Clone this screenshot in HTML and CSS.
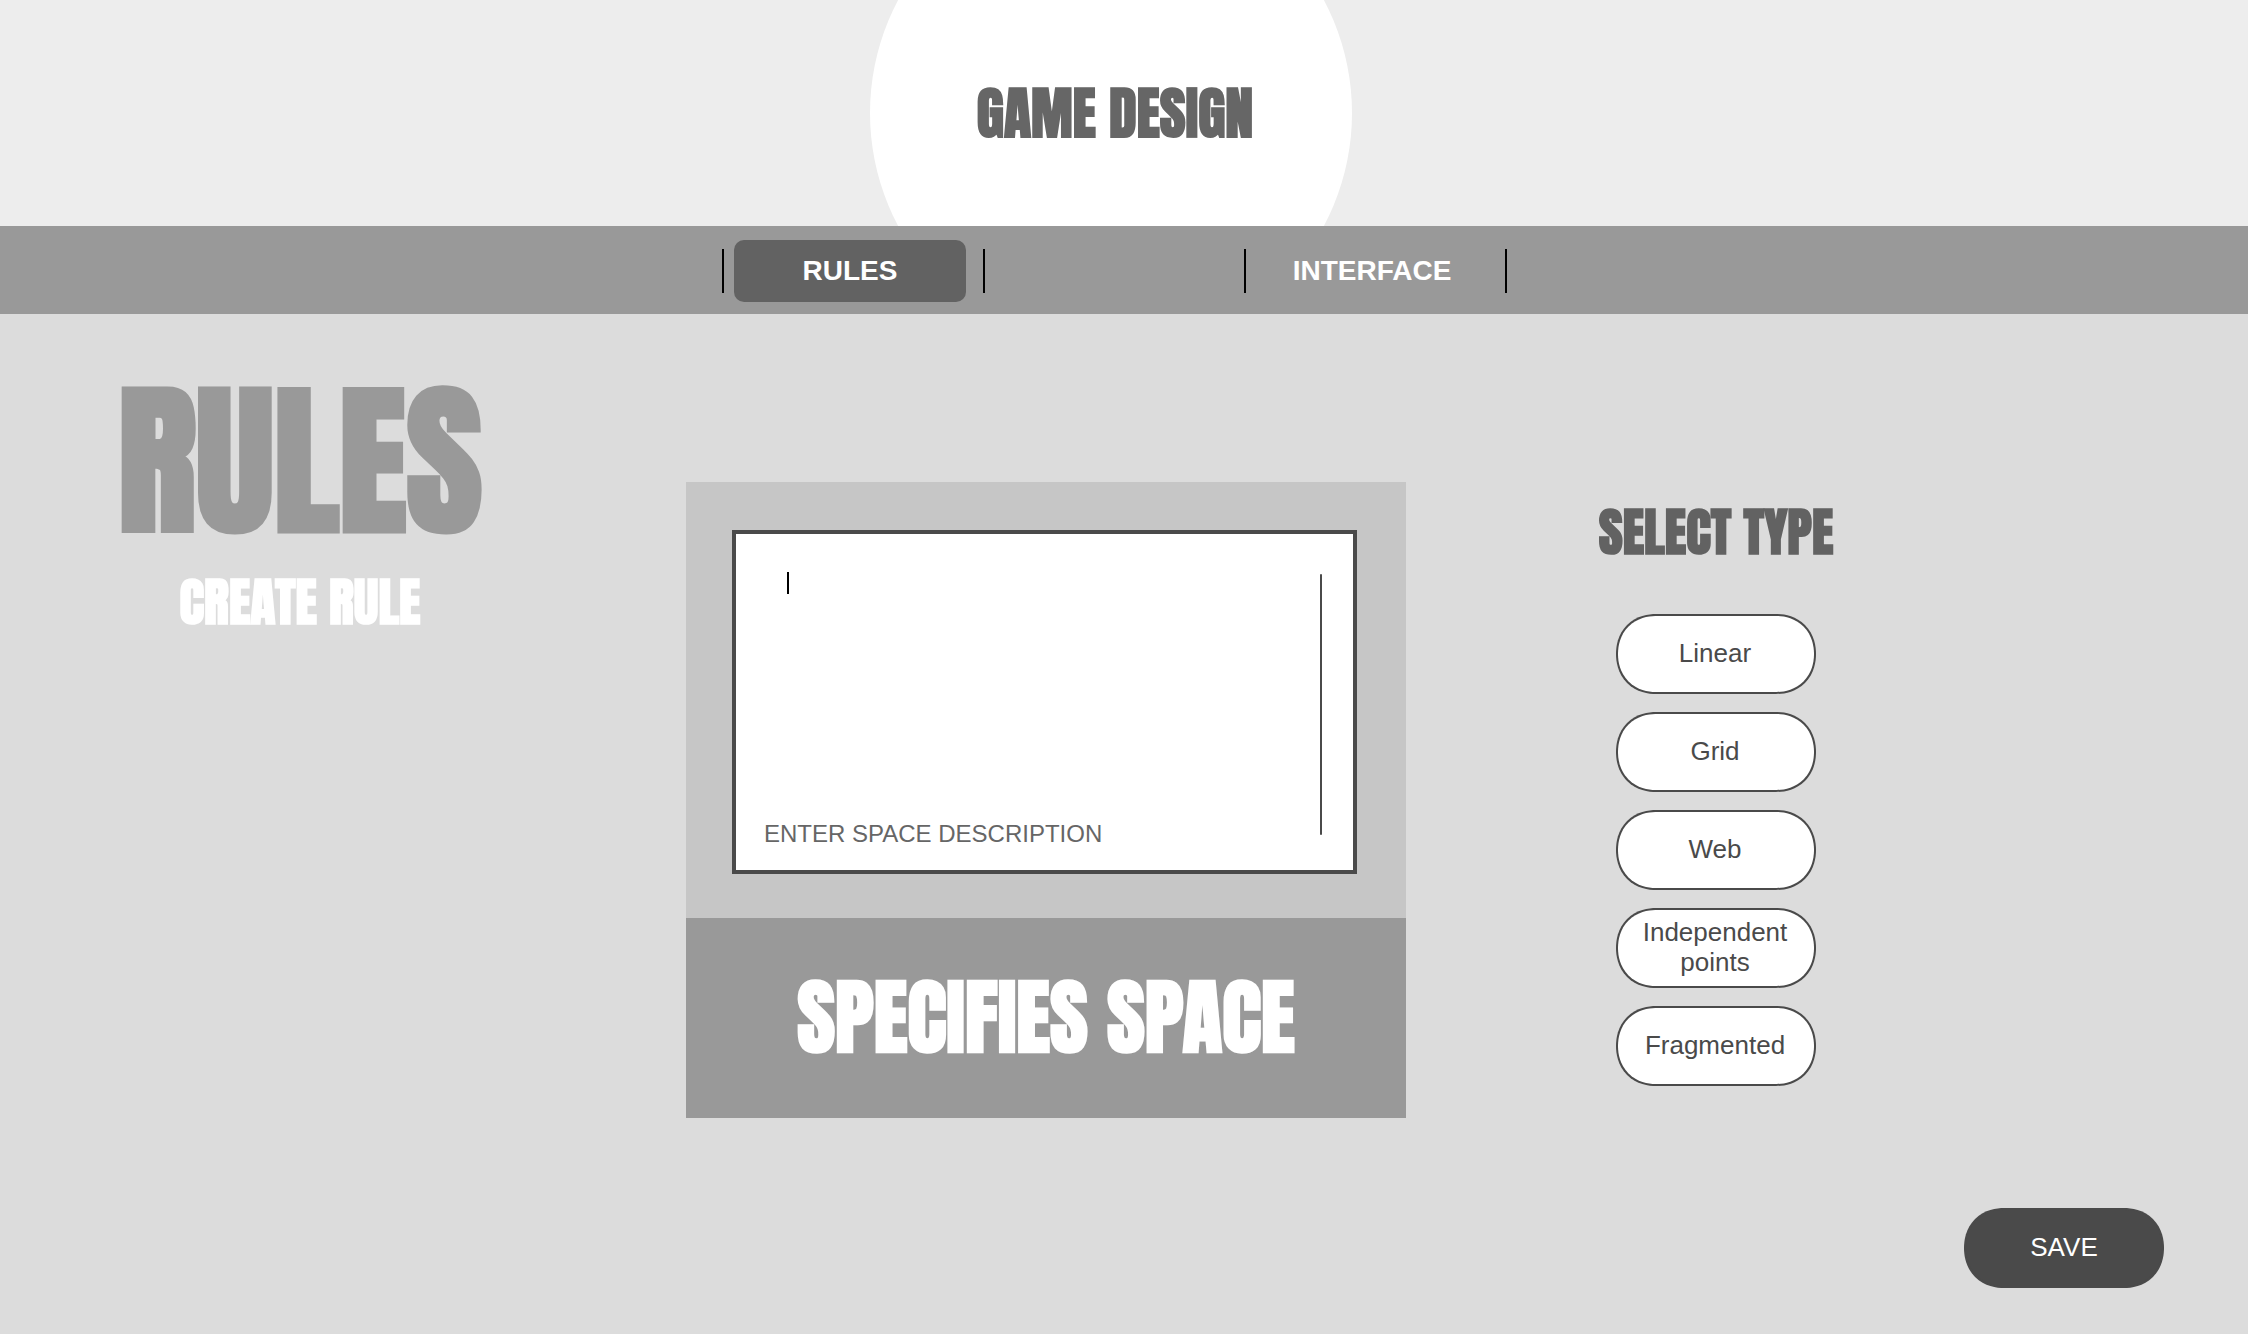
FILE: index.html
```html
<!DOCTYPE html>
<html lang="en">
<head>
<meta charset="utf-8">
<title>Game Design</title>
<link rel="stylesheet" href="styles.css">
</head>
<body>
<header class="masthead">
  <div class="disc"><h1 class="display brand">GAME DESIGN</h1></div>
</header>
<nav class="tabs">
  <ul class="tab-list">
    <li class="tab"><a class="tab-link active" href="#rules" aria-current="page">RULES</a></li>
    <li class="tab"></li>
    <li class="tab"><a class="tab-link" href="#interface">INTERFACE</a></li>
  </ul>
</nav>
<main class="workspace">
  <section class="intro">
    <h2 class="display section-title">RULES</h2>
    <p class="display step">CREATE RULE</p>
  </section>
  <section class="card">
    <div class="card-body">
      <div class="editor">
        <div class="entry">
          <span class="caret"></span>
          <textarea class="input" id="description"></textarea>
        </div>
        <label class="hint" for="description">ENTER SPACE DESCRIPTION</label>
        <span class="rail"></span>
      </div>
    </div>
    <h2 class="display card-title">SPECIFIES SPACE</h2>
  </section>
  <section class="types">
    <h2 class="display types-title">SELECT TYPE</h2>
    <button class="pill" type="button">Linear</button>
    <button class="pill" type="button">Grid</button>
    <button class="pill" type="button">Web</button>
    <button class="pill" type="button">Independent points</button>
    <button class="pill" type="button">Fragmented</button>
  </section>
  <div class="actions">
    <button class="pill save" type="submit">SAVE</button>
  </div>
</main>
</body>
</html>
```
FILE: styles.css
```css
* { box-sizing: border-box; margin: 0; }

body {
  display: flex;
  flex-direction: column;
  min-height: 100vh;
  border-right: 2px solid #fff;
  background: #dcdcdc;
  color: #4a4a4a;
  font-family: "Liberation Sans", Arial, sans-serif;
  font-size: 26px;
  line-height: 30px;
}

.display {
  font-family: Impact, Anton, "Liberation Sans Narrow", "DejaVu Sans Condensed", sans-serif;
  font-weight: 900;
  white-space: nowrap;
  text-align: center;
}

.masthead {
  display: flex;
  align-items: center;
  justify-content: center;
  height: 226px;
  padding-right: 26px;
  overflow: hidden;
  background: #ededed;
}

.disc {
  display: flex;
  flex: none;
  align-items: center;
  justify-content: center;
  width: 482px;
  height: 482px;
  padding-left: 8px;
  border-radius: 50%;
  background: #fff;
}

.brand { color: #666; font-size: 56px; line-height: 60px; }

.tabs {
  display: flex;
  justify-content: center;
  padding: 23px 20px 21px 0;
  background: #999;
}

.tab-list {
  display: flex;
  padding: 0;
  border-right: 2px solid #000;
  list-style: none;
}

.tab {
  display: flex;
  align-items: center;
  justify-content: center;
  width: 261px;
  height: 44px;
  padding-right: 6px;
  border-left: 2px solid #000;
}

.tab-link {
  flex: none;
  width: 232px;
  border-radius: 10px;
  color: #fff;
  font-size: 28px;
  font-weight: bold;
  line-height: 62px;
  text-align: center;
  text-decoration: none;
}

.active { background: #626262; }

.workspace {
  display: grid;
  flex: 1;
  grid-template-columns: minmax(0, 600fr) minmax(0, 892fr) minmax(0, 448fr) minmax(0, 308fr);
}

.intro { padding-top: 38px; }
.section-title { color: #999; font-size: 164px; line-height: 220px; }
.step { color: #fff; font-size: 52px; line-height: 60px; }

.card {
  justify-self: center;
  width: 100%;
  max-width: 720px;
  margin-top: 168px;
}

.card-body { padding: 48px 49px 44px 46px; background: #c6c6c6; }

.editor {
  display: grid;
  grid-template: 1fr auto / 1fr auto;
  height: 344px;
  padding: 38px 31px 21px 28px;
  border: 4px solid #4a4a4a;
  background: #fff;
}

.entry { display: flex; padding-left: 23px; }
.caret { width: 2px; height: 22px; background: #000; }

.input {
  flex: 1;
  padding: 0;
  border: 0;
  outline: 0;
  background: none;
  color: inherit;
  font: inherit;
  resize: none;
}

.hint { grid-row: 2; color: #666; font-size: 24px; }

.rail {
  grid-area: 1 / 2 / 3 / 3;
  width: 2px;
  margin: 2px 0 14px;
  border-radius: 1px;
  background: #4a4a4a;
}

.card-title {
  background: #999;
  color: #fff;
  font-size: 82px;
  line-height: 200px;
}

.types {
  display: flex;
  flex-direction: column;
  align-items: center;
  gap: 18px;
  padding-top: 188px;
}

.types-title { margin-bottom: 34px; color: #626262; font-size: 52px; line-height: 60px; }

.pill {
  width: 200px;
  height: 80px;
  padding: 0 22px 2px 20px;
  border: 2px solid #4a4a4a;
  border-radius: 40px;
  corner-shape: superellipse(1.1);
  background: #fff;
  color: inherit;
  font: inherit;
}

.actions {
  display: flex;
  align-items: flex-end;
  justify-content: flex-end;
  padding: 0 84px 46px 0;
}

.save { padding-left: 22px; background: #4a4a4a; color: #fff; }
```
